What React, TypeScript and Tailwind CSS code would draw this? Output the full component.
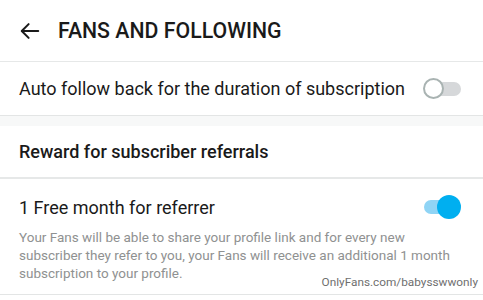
import React from 'react';

const Toggle: React.FC<{ on: boolean }> = ({ on }) => {
  if (on) {
    return (
      <div className="relative w-[38px] h-[24px] shrink-0">
        <div className="absolute left-[1px] top-[5px] w-[32px] h-[14px] rounded-full bg-[#8fd4f5]" />
        <div className="absolute left-[14px] top-[0px] w-[24px] h-[24px] rounded-full bg-[#00aff0]" />
      </div>
    );
  }
  return (
    <div className="relative w-[38px] h-[22px] shrink-0">
      <div className="absolute left-[7px] top-[4px] w-[31px] h-[14px] rounded-full bg-[#d6d8da]" />
      <div className="absolute left-0 top-0 w-[21px] h-[21px] rounded-full bg-white border-2 border-[#a9b3b2]" />
    </div>
  );
};

const App: React.FC = () => {
  return (
    <div className="relative w-[483px] h-[300px] overflow-hidden bg-white text-[#1a1a1a] font-['Roboto',sans-serif]">
      <div className="h-[62px] flex items-center border-b border-[#e6e8e8]">
        <svg className="ml-[19px] w-[22px] h-[22px]" viewBox="0 0 24 24" fill="none" stroke="#1a1a1a" strokeWidth="2.2" strokeLinecap="round" strokeLinejoin="round">
          <path d="M21 12H3.5" />
          <path d="M10.5 4.5 3 12l7.5 7.5" />
        </svg>
        <h1 className="ml-[17px] mt-[1px] text-[21.3px] font-medium">FANS AND FOLLOWING</h1>
      </div>

      <div className="h-[54px] flex items-center justify-between pl-[19px] pr-[22px] border-b border-[#e3e5e5]">
        <span className="text-[18px]">Auto follow back for the duration of subscription</span>
        <Toggle on={false} />
      </div>

      <div className="h-[10px] bg-[#f7f8f8]" />

      <div className="h-[53px] flex items-center pl-[19px] border-b-2 border-[#e6e8e8]">
        <span className="text-[18px] font-medium">Reward for subscriber referrals</span>
      </div>

      <div className="pl-[19px] pr-[22px] border-b border-[#e3e5e5] h-[116px]">
        <div className="h-[56px] flex items-center justify-between">
          <span className="text-[18px]">1 Free month for referrer</span>
          <Toggle on={true} />
        </div>
        <p className="-mt-[7px] w-[445px] text-[13.5px] leading-[18px] text-[#8f9191]">
          Your Fans will be able to share your profile link and for every new subscriber they refer to you, your Fans will receive an additional 1 month subscription to your profile.
        </p>
      </div>

      <div className="absolute right-[5px] top-[275px] text-[11.8px] leading-[14px] text-[#6f6f6f]">OnlyFans.com/babysswwonly</div>
    </div>
  );
};

export default App;
